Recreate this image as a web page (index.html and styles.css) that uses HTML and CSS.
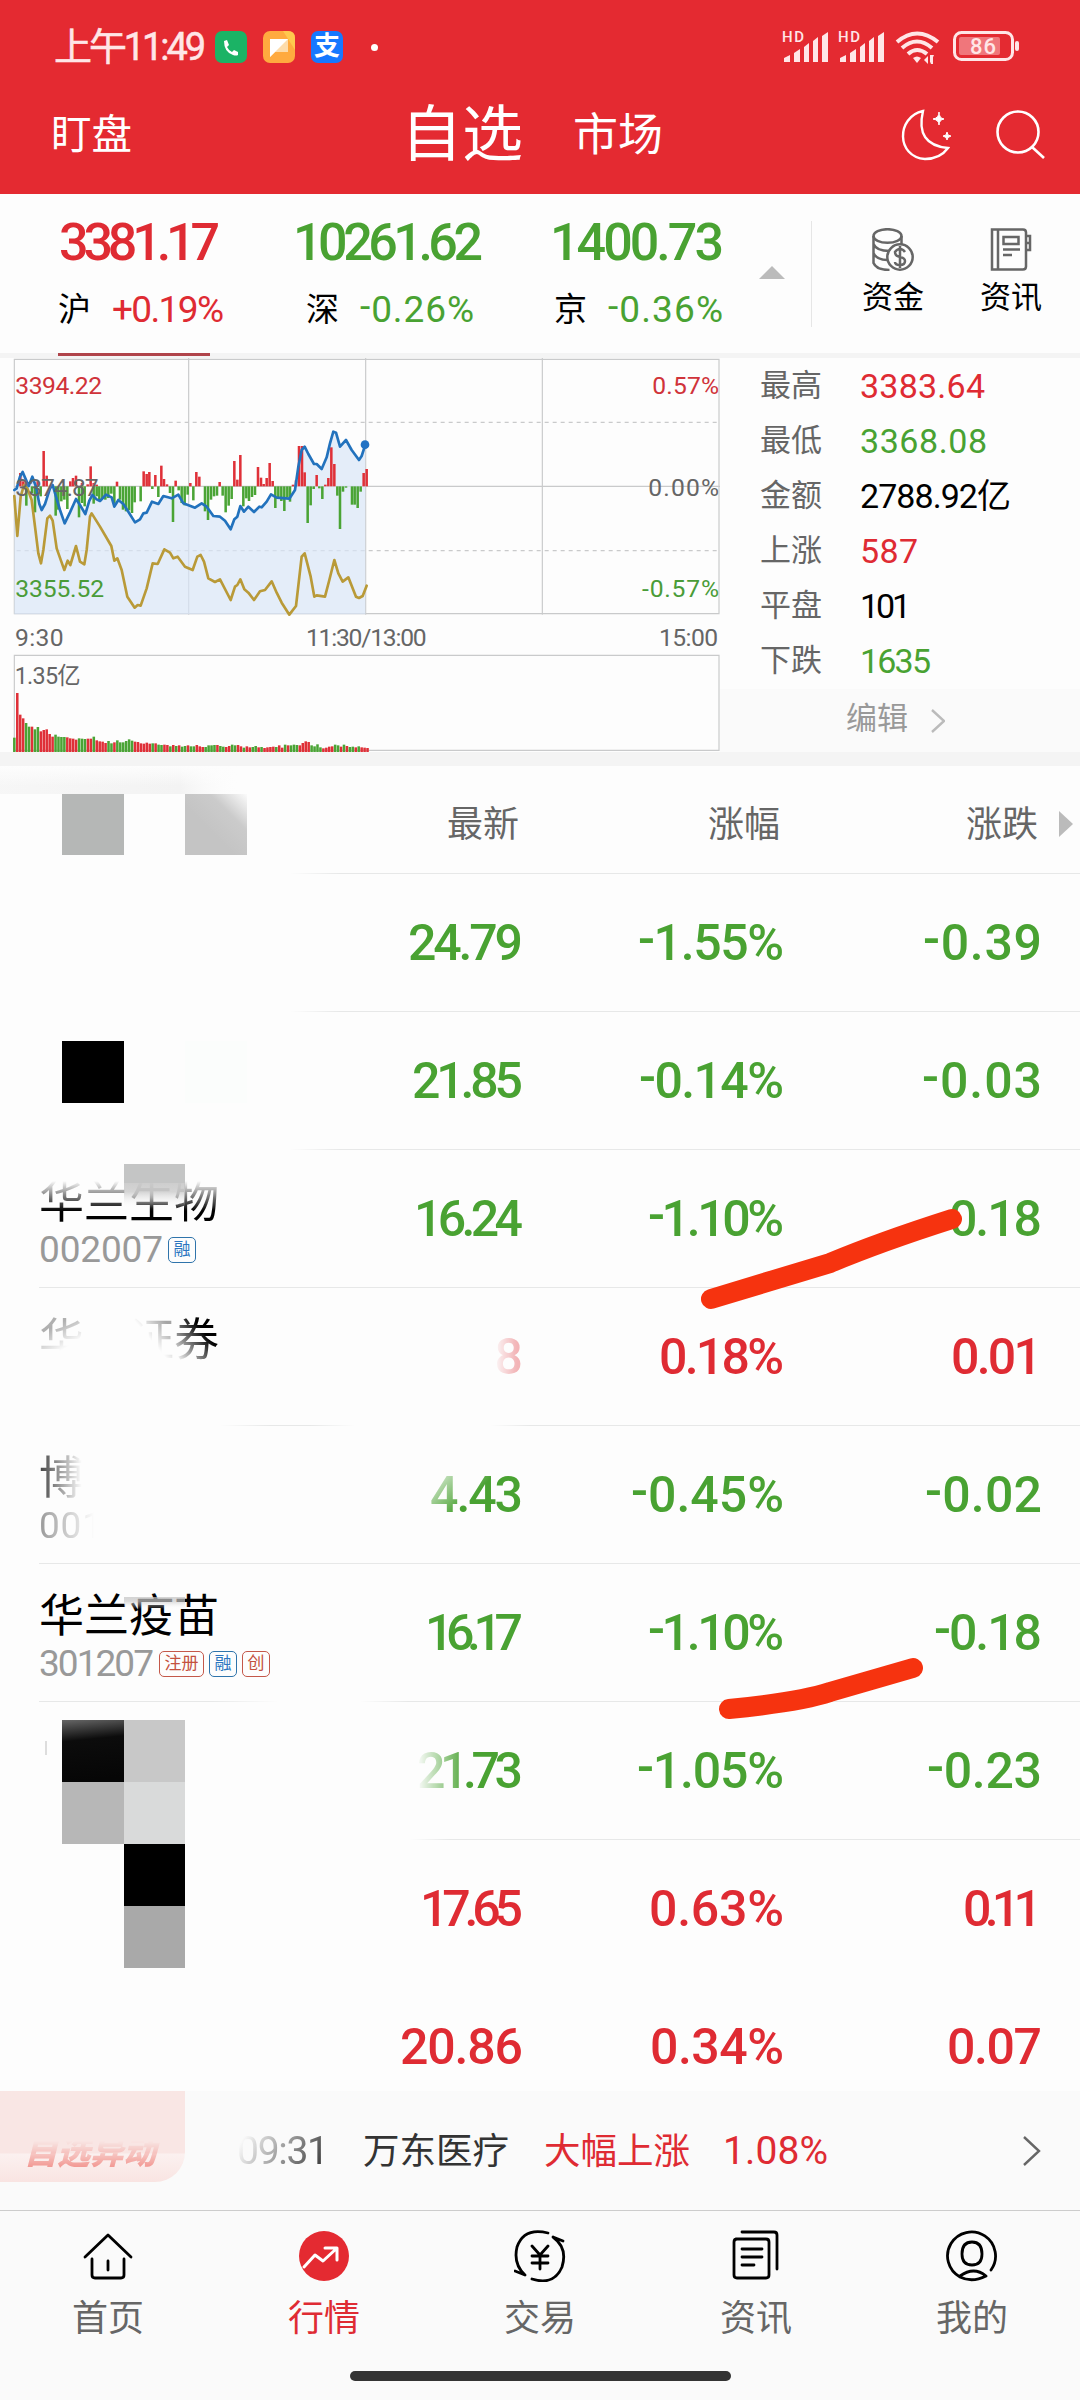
FILE: index.html
```html
<!DOCTYPE html>
<html lang="zh-CN">
<head>
    <meta charset="UTF-8">
    <meta name="viewport" content="width=device-width, initial-scale=1.0">
    <title>自选</title>
    <link rel="stylesheet" href="styles.css">
</head>
<body>
    <header class="top">
        <div class="status">
            <span class="clock" data-w="148">上午11:49</span>
            <svg class="app" viewBox="0 0 32 32"><rect width="32" height="32" rx="7" fill="#1bb365"/><path d="M9 10l3-1 2 5-2 2q2 4 5 5l2-2 4 2v3q-2 1-5 0Q9 21 9 10z" fill="#fff"/></svg>
            <svg class="app" viewBox="0 0 32 32"><rect width="32" height="32" rx="7" fill="#ffaa3f"/><path d="M20 0h5q7 0 7 7v12z" fill="#ffc84e"/><path d="M7 8h18v13H12l-5 5z" fill="#fddcab"/><path d="M7 8h18L7 26z" fill="#fff"/></svg>
            <span class="app alipay">支</span>
            <i class="dot"></i>
            <svg class="signals" viewBox="0 -4 238 42">
                <g fill="#ffe6e7">
                    <text x="0" y="12" font-size="15" font-weight="500" textLength="22">HD</text>
                    <path d="M2 28l6-3v7H2zM12 23l6-4v13h-6zM22 17l5-4v19h-5zM31 11l5-4v25h-5zM40 6l6-4v30h-6z"/>
                    <text x="56" y="12" font-size="15" font-weight="500" textLength="22">HD</text>
                    <path d="M58 28l6-3v7h-6zM68 23l6-4v13h-6zM78 17l5-4v19h-5zM87 11l5-4v25h-5zM96 6l6-4v30h-6z"/>
                    <path d="M131 28q4-3 8 0l-4 5z"/>
                    <path d="M142 30l4-4v8zM148 34V25l4 0zM149 26h2v8h-2z"/>
                </g>
                <g fill="none" stroke="#ffe6e7" stroke-width="4">
                    <path d="M115 12q20-17 41 0M120 18q15-13 30 0M126 24q9-8 19 0"/>
                    <rect x="172.500" y="2.500" width="58" height="27" rx="7" stroke-width="3"/>
                </g>
                <rect x="177" y="7" width="41" height="18" rx="2" fill="#f0767b"/>
                <rect x="233" y="11" width="4" height="10" rx="2" fill="#ffe6e7"/>
                <text x="188" y="24" font-size="22" font-weight="500" fill="#ffe6e7" textLength="26">86</text>
            </svg>
        </div>
        <nav class="head-nav">
            <span class="watch">盯盘</span>
            <span class="mine">自选</span>
            <span class="market">市场</span>
            <svg class="moon" viewBox="0 0 52 52" fill="none" stroke="#fff" stroke-width="2.400">
                <path d="M22 2C-5 8-5 48 24 50q15 0 23-11Q14 36 22 2z"/>
                <path d="M38 3q0 6 5 7-5 1-5 6 0-5-6-6 6-1 6-7zM46 23q0 4 4 4-4 1-4 4 0-3-4-4 4 0 4-4z" fill="#fff" stroke-width="1"/>
            </svg>
            <svg class="search" viewBox="0 0 50 50" fill="none" stroke="#fff" stroke-width="2.600"><circle cx="22" cy="22" r="20.500"/><path d="M36 37l12 11"/></svg>
        </nav>
    </header>

    <section class="indices">
        <div class="index first">
            <b class="red" data-w="157">3381.17</b>
            <p><span>沪</span><em class="red" data-w="108">+0.19%</em></p>
        </div>
        <div class="index second">
            <b class="green" data-w="186">10261.62</b>
            <p><span>深</span><em class="green" data-w="110">-0.26%</em></p>
        </div>
        <div class="index third">
            <b class="green" data-w="170">1400.73</b>
            <p><span>京</span><em class="green" data-w="111">-0.36%</em></p>
        </div>
        <i class="fold"></i>
        <div class="tools">
            <div class="tool">
                <svg viewBox="0 0 42 43" fill="none" stroke="#666" stroke-width="2.500">
                    <ellipse cx="15.500" cy="8" rx="14" ry="6.800"/>
                    <path d="M1.500 8v27q3 7 16 7M29.500 8v8M1.500 16q3 7 16 7M1.500 25q3 7 14 7"/>
                    <circle cx="28" cy="29" r="12.700" fill="#fdfdfd"/>
                    <path d="M33 24q-2-3-5-3t-5 3q0 4 5 5t5 4q0 4-5 4t-5-3M28 18v22"/>
                </svg>
                <span>资金</span>
            </div>
            <div class="tool">
                <svg viewBox="0 0 42 43" fill="none" stroke="#666" stroke-width="2.500">
                    <path d="M2 1.500h31q3 0 3 3v34q0 3-3 3H2zM8 1v41M13.500 9h15v7h-15zM13 21.500h17M13 27h9M36 8h4v14h-4M36 15h4"/>
                </svg>
                <span>资讯</span>
            </div>
        </div>
    </section>

    <section class="overview">
        <svg class="chart" viewBox="0 24 2160 1182">
            <g fill="none" stroke="#c9cacb" stroke-width="3.500">
                <path d="M43 28H2157V791H43zM566 24V794M1097 24V794M1627 24V794M43 409H2160"/>
                <path d="M50 217H2157M50 602H2157" stroke-dasharray="12 12"/>
                <path d="M43 916H2157V1201H43z"/>
            </g>
            <path id="area" fill="#d8e6f6" fill-opacity=".7"/>
            <g id="bars"></g>
            <g fill="none" stroke-width="8" stroke-linejoin="round" stroke-linecap="round">
                <path id="average" stroke="#b99a38"/>
                <path id="price" stroke="#2272bd"/>
            </g>
            <circle cx="1095" cy="284" r="13" fill="#2272c4"/>
            <g id="volumes"></g>
            <g font-size="74" fill="#666">
                <text x="46" y="132" textLength="260" fill="#d0333a">3394.22</text>
                <text x="46" y="437" textLength="250">3374.87</text>
                <text x="46" y="741" textLength="266" fill="#4a9c38">3355.52</text>
                <text x="1957" y="132" textLength="200" fill="#d0333a">0.57%</text>
                <text x="1945" y="438" textLength="212">0.00%</text>
                <text x="1926" y="741" textLength="231" fill="#4a9c38">-0.57%</text>
                <text x="45" y="887" textLength="146">9:30</text>
                <text x="918" y="887" textLength="362">11:30/13:00</text>
                <text x="1977" y="887" textLength="177">15:00</text>
                <text x="44" y="1002" textLength="198" font-size="70">1.35亿</text>
            </g>
        </svg>
        <div class="side">
            <dl>
                <dt>最高</dt><dd class="red"><span data-w="121">3383.64</span></dd>
                <dt>最低</dt><dd class="green"><span data-w="123">3368.08</span></dd>
                <dt>金额</dt><dd><span data-w="147">2788.92亿</span></dd>
                <dt>上涨</dt><dd class="red"><span data-w="54">587</span></dd>
                <dt>平盘</dt><dd><span data-w="47">101</span></dd>
                <dt>下跌</dt><dd class="green"><span data-w="67">1635</span></dd>
            </dl>
            <div class="edit"><span>编辑</span><svg viewBox="0 0 14 24"><path d="M1 1l12 11L1 23" fill="none" stroke="#bbb" stroke-width="2.400"/></svg></div>
        </div>
    </section>

    <section class="quotes">
        <div class="row titles">
            <span></span><span>最新</span><span>涨幅</span><span>涨跌</span><i class="more"></i>
        </div>
        <div class="row green line-short">
            <div></div>
            <b><span data-w="111">24.79</span></b><b><span data-w="142">-1.55%</span></b><b><span data-w="115">-0.39</span></b>
        </div>
        <div class="row green line-short">
            <div></div>
            <b><span data-w="107">21.85</span></b><b><span data-w="141">-0.14%</span></b><b><span data-w="116">-0.03</span></b>
        </div>
        <div class="row green line-short">
            <div class="stock">
                <h3 class="fade-top">华兰生物</h3>
                <p><span data-w="120">002007</span><i class="tag blue">融</i></p>
            </div>
            <b><span data-w="105">16.24</span></b><b><span data-w="132">-1.10%</span></b><b><span data-w="104">-0.18</span></b>
        </div>
        <div class="row red line-name">
            <div class="stock">
                <h3><span class="faint-start">华</span><span class="faint-end">证</span><span class="fade-left">券</span></h3>
            </div>
            <b class="ghost"><span>8</span></b><b><span data-w="121">0.18%</span></b><b><span data-w="87">0.01</span></b>
        </div>
        <div class="row green line-mid">
            <div class="stock">
                <h3><span class="fade-right">博</span></h3>
                <p><span class="fade-code" data-w="60">001</span></p>
            </div>
            <b class="fade-digit"><span data-w="89">4.43</span></b><b><span data-w="149">-0.45%</span></b><b><span data-w="113">-0.02</span></b>
        </div>
        <div class="row green line-name">
            <div class="stock">
                <h3>华兰疫苗</h3>
                <p><span data-w="111">301207</span><i class="tag">注册</i><i class="tag blue">融</i><i class="tag">创</i></p>
            </div>
            <b><span data-w="94">16.17</span></b><b><span data-w="132">-1.10%</span></b><b><span data-w="104">-0.18</span></b>
        </div>
        <div class="row green line-name gap">
            <div></div>
            <b class="fade-number"><span data-w="102">21.73</span></b><b><span data-w="143">-1.05%</span></b><b><span data-w="111">-0.23</span></b>
        </div>
        <div class="row red line-far">
            <div></div>
            <b><span data-w="99">17.65</span></b><b><span data-w="131">0.63%</span></b><b><span data-w="75">0.11</span></b>
        </div>
        <div class="row red line-none">
            <div></div>
            <b><span data-w="119">20.86</span></b><b><span data-w="130">0.34%</span></b><b><span data-w="91">0.07</span></b>
        </div>

        <!-- mosaic blocks and marker strokes lying over the list -->
        <svg class="marks" viewBox="0 766 1080 1325">
            <defs>
                <linearGradient id="haze" x1="0" y1="0" x2="1" y2="0"><stop offset="0" stop-color="#f5f5f5" stop-opacity=".8"/><stop offset=".75" stop-color="#f3f3f3"/><stop offset="1" stop-color="#fdfdfd" stop-opacity="0"/></linearGradient>
                <linearGradient id="hazeDown" x1="0" y1="0" x2="0" y2="1"><stop offset="0" stop-color="#fdfdfd"/><stop offset="1" stop-color="#fdfdfd" stop-opacity="0"/></linearGradient>
                <linearGradient id="corner" x1=".4" y1=".6" x2="1" y2="0"><stop offset="0" stop-color="#c4c4c4"/><stop offset=".5" stop-color="#cbcbcb"/><stop offset="1" stop-color="#fbfbfb"/></linearGradient>
                <linearGradient id="down" x1="0" y1="0" x2="0" y2="1"><stop offset="0" stop-color="#c2c2c2"/><stop offset=".35" stop-color="#cacaca"/><stop offset="1" stop-color="#fdfdfd" stop-opacity="0"/></linearGradient>
                <linearGradient id="ink" x1="0" y1="0" x2=".1" y2="1"><stop offset="0" stop-color="#666"/><stop offset=".35" stop-color="#0c0c0c"/><stop offset="1" stop-color="#060606"/></linearGradient>
            </defs>
            <rect x="0" y="766" width="240" height="28" fill="url(#haze)"/>
            <rect x="0" y="766" width="240" height="20" fill="url(#hazeDown)"/>
            <rect x="62" y="794" width="62" height="61" fill="#b5b7b6"/>
            <rect x="185" y="794" width="62" height="61" fill="url(#corner)"/>
            <rect x="62" y="1041" width="62" height="62" fill="#000"/>
            <rect x="185" y="1041" width="62" height="62" fill="#fbfdfc"/>
            <rect x="124" y="1164" width="61" height="19" fill="#c4c5c5"/>
            <rect x="124" y="1183" width="61" height="25" fill="url(#down)" opacity=".8"/>
            <rect x="124" y="1597" width="61" height="12" fill="url(#down)" opacity=".7"/>
            <rect x="62" y="1720" width="62" height="62" fill="url(#ink)"/>
            <rect x="124" y="1720" width="61" height="62" fill="#c8c8c8"/>
            <rect x="62" y="1782" width="62" height="62" fill="#b7b7b7"/>
            <rect x="124" y="1782" width="61" height="62" fill="#d9dada"/>
            <rect x="124" y="1844" width="61" height="62" fill="#000"/>
            <rect x="124" y="1906" width="61" height="62" fill="#a9a9a9"/>
            <rect x="45" y="1741" width="2" height="14" fill="#ddd"/>
            <g fill="none" stroke="#f6330f" stroke-width="20" stroke-linecap="round">
                <path d="M711 1299L830 1263Q880 1242 952 1219"/>
                <path d="M729 1709Q800 1702 830 1692L913 1668"/>
            </g>
        </svg>
    </section>

    <section class="ticker">
        <div class="badge"><span>自选异动</span></div>
        <span class="time" data-w="88">09:31</span>
        <span class="who">万东医疗</span>
        <span class="what red">大幅上涨</span>
        <span class="rate red" data-w="101">1.08%</span>
        <svg viewBox="0 0 18 30"><path d="M1 1l15 14L1 29" fill="none" stroke="#666" stroke-width="2.400"/></svg>
    </section>

    <footer class="tabs">
        <div class="tab">
            <svg viewBox="0 0 52 52"><path d="M3 27L26 5l23 22M10 29v16q0 3 3 3h26q3 0 3-3V29M26 31v9"/></svg>
            <span>首页</span>
        </div>
        <div class="tab active">
            <svg viewBox="0 0 52 52"><circle cx="26" cy="26" r="25" fill="#e42a31" stroke="none"/><path d="M6 37l11-12 8 6 13-12M27 18h12v12" stroke="#fff" stroke-width="3"/></svg>
            <span>行情</span>
        </div>
        <div class="tab">
            <svg viewBox="0 0 52 52"><path d="M34 3Q10-3 3 17q-4 17 8 28L1 41M18 49q22 7 30-12 6-19-9-30l10 4M18 16l8 9 8-9M26 25v14M18 26h16M18 33h16"/></svg>
            <span>交易</span>
        </div>
        <div class="tab">
            <svg viewBox="0 0 52 52"><path d="M6 9h30q3 0 3 3v33q0 3-3 3H7q-3 0-3-3V12q0-3 3-3M12 2h32q3 0 3 3v34M12 19h20M12 27h20M12 35h12"/></svg>
            <span>资讯</span>
        </div>
        <div class="tab">
            <svg viewBox="0 0 52 52"><path d="M45 40A24 24 0 1 0 14 47q12 6 26-1-12-10-26 0M26 12q-10 0-10 12 0 11 10 11t10-11q0-12-10-12z"/></svg>
            <span>我的</span>
        </div>
    </footer>
    <div class="home-bar"></div>

    <script>
        const START = 43;
        const STEP = 8.83;

        const price = '43,420 50,415 60,380 68,366 86,408 97,380 108,410 118,462 125,480 135,462 150,415 158,405 168,440 180,480 194,520 210,487 228,447 240,465 256,492 268,452 277,435 290,448 300,453 318,434 335,442 343,470 355,450 370,462 385,485 405,517 420,508 430,490 440,488 456,455 475,462 490,438 515,445 535,434 550,460 585,473 605,460 620,470 640,498 660,500 675,512 692,538 703,508 712,500 721,468 732,485 745,470 762,486 778,470 785,472 800,455 813,433 830,443 868,446 885,420 895,350 905,300 914,290 925,312 942,342 950,342 965,357 980,322 990,280 1000,245 1008,248 1020,290 1038,270 1055,300 1077,330 1085,318 1096,284';
        const average = '43,438 52,558 62,440 72,405 82,415 95,450 105,530 115,610 123,640 130,600 142,505 150,497 158,512 170,595 184,635 193,660 203,632 211,645 228,588 240,635 253,643 260,600 270,500 275,490 300,530 334,588 343,632 352,625 365,660 382,740 404,773 413,765 422,767 440,715 458,640 473,642 493,598 510,608 520,625 533,620 555,650 578,660 592,620 602,615 612,635 625,685 645,696 660,688 692,750 705,710 712,705 721,688 733,718 745,728 762,750 780,724 795,720 815,694 830,728 845,758 868,794 888,768 905,620 914,610 932,680 943,740 950,736 975,740 988,690 1003,630 1015,670 1028,695 1045,682 1068,740 1077,744 1088,738 1100,707';

        // [x, height], negative goes below the middle line
        const bars = [[61,40],[70,15],[113,15],[131,106],[140,32],[211,15],[219,25],[228,32],[246,10],[263,6],[272,60],[281,10],[290,5],[351,14],[431,45],[440,37],[448,43],[466,34],[484,62],[492,22],[501,6],[527,17],[571,10],[589,43],[598,29],[659,13],[703,76],[712,20],[721,94],[774,58],[783,26],[791,7],[800,25],[809,70],[818,16],[879,5],[888,18],[897,121],[906,121],[914,42],[950,34],[976,5],[985,25],[994,117],[1003,67],[1091,40],[1100,52],
            [79,-58],[96,-20],[105,-78],[122,-30],[167,-88],[175,-70],[184,-45],[193,-40],[202,-68],[237,-93],[246,-50],[254,-60],[281,-52],[290,-30],[298,-42],[307,-38],[316,-40],[325,-35],[334,-22],[343,-50],[360,-40],[369,-70],[378,-75],[387,-72],[396,-80],[404,-48],[422,-45],[457,-8],[475,-32],[510,-20],[519,-107],[536,-12],[545,-50],[554,-57],[563,-25],[580,-42],[615,-75],[624,-101],[633,-40],[642,-30],[651,-28],[668,-28],[677,-78],[686,-58],[695,-38],[730,-60],[739,-36],[747,-44],[756,-32],[765,-26],[826,-65],[835,-34],[844,-44],[853,-74],[862,-33],[870,-46],[923,-110],[932,-57],[941,-8],[958,-6],[967,-38],[1012,-28],[1020,-128],[1029,-16],[1038,-4],[1056,-55],[1064,-55],[1073,-65],[1082,-16]];

        const volumes = [43,177,112,101,87,76,76,68,75,62,66,68,54,46,52,46,45,45,44,41,40,37,41,40,39,40,40,46,35,32,31,27,33,26,29,35,29,29,33,38,34,31,30,26,25,28,25,26,26,22,21,22,21,17,21,18,20,16,18,20,17,17,21,17,15,15,20,20,21,21,18,16,15,18,22,20,21,17,13,17,14,15,18,14,15,12,14,15,16,15,20,13,22,20,20,22,21,20,27,32,30,20,17,23,14,11,13,16,17,22,20,16,22,18,15,16,14,17,14,13,12];
        const colours = 'grrrggrggrrrrrggggrrrrgggrrgrrrrggrggggggrrrrrrgrggrrgrgrggrggrrrggggrggrrggrrgrrggrgrrrrgrrgrgggrrrrggggrrrrggrgrggrgrrr';

        function toPath(points) {
            return 'M' + points.split(' ').join('L');
        }

        function rect(x, y, h, up) {
            return `<rect x="${x - 3.8}" y="${y}" width="7.6" height="${h}" fill="${up ? '#df3038' : '#4aa435'}"/>`;
        }

        function drawChart() {
            document.getElementById('price').setAttribute('d', toPath(price));
            document.getElementById('average').setAttribute('d', toPath(average));
            document.getElementById('area').setAttribute('d', toPath(price) + 'V793H43Z');
            document.getElementById('bars').innerHTML = bars.map(([x, h]) => rect(x, h > 0 ? 409 - h : 409, Math.abs(h), h > 0)).join('');
            document.getElementById('volumes').innerHTML = volumes.map((h, i) => rect(START + i * STEP, 1206 - h, h, colours[i] === 'r')).join('');
        }

        // spread or tighten the figures to the width given in data-w
        function fitFigures() {
            document.querySelectorAll('[data-w]').forEach(el => {
                const text = el.textContent;
                const gap = (Number(el.dataset.w) + 4 - el.getBoundingClientRect().width) / (text.length - 1);
                el.style.letterSpacing = gap + 'px';
                el.style.marginRight = -gap + 'px';
                if (text[0] === '-') {
                    el.innerHTML = '<i class="minus">-</i>' + text.slice(1);
                }
            });
        }

        drawChart();
        fitFigures();
    </script>
</body>
</html>
```
FILE: styles.css
```css
* {
    box-sizing: border-box;
}
body {
    margin: 0;
    width: 1080px;
    height: 2400px;
    overflow: hidden;
    background-color: #fdfdfd;
    color: #000;
    font-family: Roboto, "Noto Sans CJK SC", sans-serif;
}
p, h3, dl, dd {
    margin: 0;
}
b {
    font-weight: 500;
}
em, i {
    font-style: normal;
}
svg {
    display: block;
    flex: none;
}
[data-w] {
    display: inline-block;
    white-space: nowrap;
}
.minus {
    line-height: 0;
    vertical-align: .08em;
}
.red {
    color: #df2b33;
}
.green {
    color: #49a232;
}

/* red header */
.top {
    height: 194px;
    background-color: #e42a31;
    color: #fff;
}
.status {
    display: flex;
    align-items: center;
    height: 94px;
    padding-left: 54px;
}
.clock {
    font-size: 38px;
    line-height: 40px;
    color: #ffe6e7;
    -webkit-text-stroke: .5px #ffe6e7;
}
.app {
    width: 32px;
    height: 32px;
    margin-left: 16px;
}
.clock + .app {
    margin-left: 9px;
}
.alipay {
    border-radius: 7px;
    background-color: #1678ff;
    font-size: 26px;
    font-weight: 700;
    line-height: 30px;
    text-align: center;
}
.dot {
    width: 7px;
    height: 7px;
    margin-left: 28px;
    border-radius: 50%;
    background-color: #fff;
}
.signals {
    width: 238px;
    height: 42px;
    margin-left: auto;
    margin-right: 60px;
}
.head-nav {
    display: flex;
    align-items: center;
    height: 82px;
    padding-left: 51px;
    line-height: 85px;
}
.watch {
    width: 350px;
    font-size: 40.5px;
}
.mine {
    width: 172px;
    font-size: 61px;
}
.market {
    width: 328px;
    font-size: 45px;
}
.moon {
    width: 52px;
    height: 52px;
}
.search {
    width: 50px;
    height: 50px;
    margin-left: 43px;
}

/* three indices */
.indices {
    display: flex;
    height: 164px;
    border-bottom: 5px solid #f4f4f4;
}
.index {
    display: flex;
    flex-direction: column;
    padding-top: 24px;
}
.index b {
    height: 50px;
    font-size: 52px;
    line-height: 50px;
}
.index p {
    display: flex;
    align-items: center;
    height: 40px;
    margin-top: 22px;
    font-size: 33px;
    line-height: 40px;
}
.index em {
    font-size: 37px;
    margin-left: 21px;
}
.first {
    width: 234px;
    margin-left: 58px;
    align-items: flex-start;
    position: relative;
}
.first b {
    margin-left: 1px;
}
.first::after {
    content: "";
    position: absolute;
    left: 0;
    bottom: -3px;
    width: 152px;
    height: 3px;
    background-color: #b0444a;
}
.second {
    width: 258px;
    align-items: flex-start;
}
.second b {
    margin-left: 1px;
}
.second p {
    padding-left: 14px;
}
.third {
    width: 209px;
    align-items: flex-start;
}
.third p {
    padding-left: 4px;
}
.fold {
    width: 0;
    height: 0;
    margin-top: 72px;
    border: 13px solid transparent;
    border-top: 0;
    border-bottom-color: #bbb;
}
.tools {
    display: flex;
    height: 106px;
    margin-top: 27px;
    margin-left: 26px;
    padding-left: 22px;
    border-left: 1px solid #e6e6e6;
}
.tool {
    width: 118px;
    display: flex;
    flex-direction: column;
    align-items: center;
    font-size: 31px;
    line-height: 40px;
}
.tool svg {
    width: 42px;
    height: 43px;
    margin-top: 7px;
    margin-bottom: 7px;
}

/* intraday chart */
.overview {
    display: flex;
    height: 408px;
    border-bottom: 14px solid #f4f4f4;
}
.chart {
    width: 720px;
    height: 394px;
}
.side {
    flex: 1;
}
.side dl {
    display: grid;
    grid-template-columns: 100px 1fr;
    grid-auto-rows: 55px;
    height: 331px;
    padding-left: 40px;
}
.side dt {
    font-size: 31px;
    line-height: 56px;
    color: #666;
}
.side dd {
    font-size: 34px;
    line-height: 57px;
}
.edit {
    display: flex;
    align-items: center;
    height: 63px;
    padding-left: 126px;
    background-color: #fafafa;
    color: #999;
    font-size: 31px;
}
.edit span {
    line-height: 58px;
    height: 62px;
}
.edit svg {
    width: 14px;
    height: 24px;
    margin-left: 23px;
}

/* watch list */
.quotes {
    position: relative;
    height: 1325px;
}
.row {
    display: grid;
    grid-template-columns: 367px 156px 261px 258px 1fr;
    position: relative;
    height: 138px;
}
.row::before {
    content: "";
    position: absolute;
    top: 0;
    left: 39px;
    right: 0;
    height: 1px;
    background-color: #e7e8e8;
}
.titles {
    height: 107px;
    font-size: 36px;
    line-height: 118px;
    color: #666;
    text-align: right;
    padding-right: 7px;
}
.titles span {
    padding-right: 4px;
}
.titles::before, .line-none::before {
    display: none;
}
.line-short::before {
    left: 290px;
    background: linear-gradient(to right, #fdfdfd, #e7e8e8 50px);
}
.line-mid::before {
    left: 220px;
    background: linear-gradient(to right, #fdfdfd, #e7e8e8 50px, #e7e8e8 90px, #fdfdfd 135px, #fdfdfd 270px, #e7e8e8 310px);
}
.gap::before {
    background: linear-gradient(to right, #e7e8e8 170px, #fdfdfd 240px, #fdfdfd 320px, #e7e8e8 370px);
}
.line-far::before {
    left: 410px;
    background: linear-gradient(to right, #fdfdfd, #e7e8e8 40px);
}
.more {
    width: 0;
    height: 0;
    margin-top: 45px;
    margin-left: 17px;
    border: 13px solid transparent;
    border-left: 14px solid #bbb;
    border-right: 0;
}
.row b {
    font-size: 50px;
    line-height: 140px;
    text-align: right;
}
.stock {
    padding-top: 20px;
    padding-left: 39px;
}
.stock h3 {
    height: 62px;
    color: #000;
    font-size: 45px;
    font-weight: 400;
    line-height: 68px;
}
.stock p {
    display: flex;
    align-items: center;
    height: 37px;
    color: #999;
    font-size: 37px;
    line-height: 37px;
}
.tag {
    height: 26px;
    margin-left: 5px;
    padding: 0 4.5px;
    border: 1.5px solid #c4584a;
    border-radius: 5px;
    color: #c4513f;
    font-size: 17px;
    line-height: 23px;
}
.blue {
    border-color: #2f74ab;
    color: #2b76c0;
}

/* half erased texts */
.fade-top {
    -webkit-mask-image: linear-gradient(to bottom, transparent 12px, #000 42px);
    mask-image: linear-gradient(to bottom, transparent 12px, #000 42px);
}
.faint-start, .faint-end, .fade-left, .fade-right {
    display: inline-block;
}
.faint-start {
    -webkit-mask-image: linear-gradient(150deg, rgba(0, 0, 0, .3) 30%, transparent 60%);
    mask-image: linear-gradient(150deg, rgba(0, 0, 0, .3) 30%, transparent 60%);
}
.faint-end {
    margin-left: 45px;
    -webkit-mask-image: linear-gradient(50deg, transparent 50%, rgba(0, 0, 0, .35) 80%);
    mask-image: linear-gradient(50deg, transparent 50%, rgba(0, 0, 0, .35) 80%);
}
.fade-left {
    -webkit-mask-image: linear-gradient(50deg, transparent 15%, #000 65%);
    mask-image: linear-gradient(50deg, transparent 15%, #000 65%);
}
.fade-right {
    -webkit-mask-image: linear-gradient(to right, rgba(0, 0, 0, .75), transparent 95%);
    mask-image: linear-gradient(to right, rgba(0, 0, 0, .75), transparent 95%);
}
.fade-code {
    -webkit-mask-image: linear-gradient(to right, #000, transparent 85%);
    mask-image: linear-gradient(to right, #000, transparent 85%);
}
.ghost {
    -webkit-mask-image: linear-gradient(to right, transparent 126px, rgba(0, 0, 0, .35) 150px);
    mask-image: linear-gradient(to right, transparent 126px, rgba(0, 0, 0, .35) 150px);
}
.fade-digit {
    -webkit-mask-image: linear-gradient(150deg, transparent 35%, #000 60%);
    mask-image: linear-gradient(135deg, transparent 35%, #000 60%);
}
.fade-number {
    -webkit-mask-image: linear-gradient(to right, transparent 50px, #000 100px);
    mask-image: linear-gradient(to right, transparent 50px, #000 100px);
}
.marks {
    position: absolute;
    top: 0;
    left: 0;
    width: 1080px;
    height: 1325px;
}

/* news ticker */
.ticker {
    display: flex;
    align-items: center;
    height: 120px;
    border-bottom: 1px solid #ccc;
    background-color: #fafafa;
    color: #333;
    font-size: 36.5px;
}
.badge {
    align-self: flex-start;
    width: 185px;
    height: 91px;
    border-radius: 0 0 30px 0;
    background: linear-gradient(to bottom, #f9e6e4 62px, #fbf1f0 63px, #f9e4e2);
}
.badge span {
    display: block;
    margin-left: 24px;
    color: #f0867f;
    font-size: 33px;
    font-weight: 900;
    font-style: italic;
    line-height: 124px;
    height: 91px;
    -webkit-mask-image: linear-gradient(to bottom, transparent 50px, #000 82px);
    mask-image: linear-gradient(to bottom, transparent 50px, #000 82px);
}
.time {
    margin-left: 52px;
    font-size: 39px;
    -webkit-mask-image: linear-gradient(120deg, transparent 10%, #000 95%);
    mask-image: linear-gradient(120deg, transparent 10%, #000 95%);
}
.who, .what {
    width: 146px;
    margin-bottom: 4px;
}
.who {
    margin-left: 34px;
}
.what {
    margin-left: 35px;
}
.rate {
    margin-left: 33px;
    font-size: 39px;
}
.ticker svg {
    width: 18px;
    height: 30px;
    margin-left: auto;
    margin-right: 39px;
}

/* bottom tabs */
.tabs {
    display: flex;
    height: 160px;
    background-color: #fafafa;
}
.tab {
    width: 216px;
    padding-top: 19px;
    display: flex;
    flex-direction: column;
    align-items: center;
    color: #666;
    font-size: 36px;
    line-height: 50px;
}
.tab svg {
    width: 52px;
    height: 52px;
    margin-bottom: 12px;
    fill: none;
    stroke: #000;
    stroke-width: 2.8px;
    stroke-linecap: round;
    stroke-linejoin: round;
}
.active {
    color: #df2b33;
}
.home-bar {
    width: 381px;
    height: 10px;
    margin: 0 auto;
    border-radius: 5px;
    background-color: #333;
    box-shadow: 0 0 0 1080px #fafafa;
    clip-path: inset(0 -350px -20px -350px);
}
```
